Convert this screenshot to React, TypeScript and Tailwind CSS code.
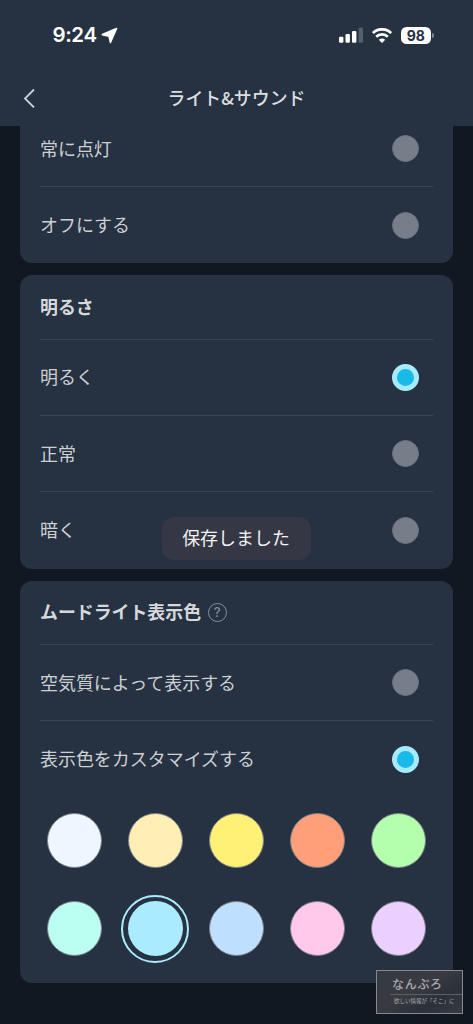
import type { ReactNode } from 'react'
import clsx from 'clsx'

const swatches = [
  { name: 'white', color: 'bg-[#eff6ff]' },
  { name: 'cream', color: 'bg-[#ffefb5]' },
  { name: 'yellow', color: 'bg-[#fff076]' },
  { name: 'orange', color: 'bg-[#ff9f79]' },
  { name: 'green', color: 'bg-[#b3ffae]' },
  { name: 'mint', color: 'bg-[#bbfff2]' },
  { name: 'aqua', color: 'bg-[#aaebff]', selected: true },
  { name: 'blue', color: 'bg-[#bfdfff]' },
  { name: 'pink', color: 'bg-[#ffc9eb]' },
  { name: 'purple', color: 'bg-[#ebd0ff]' },
]

function StatusBar() {
  return (
    <div className="flex h-[70px] items-center justify-between pl-[52.5px] pr-[39.5px]">
      <div className="flex items-center gap-[4px] font-['Inter',sans-serif] text-[20.5px] font-semibold leading-none tracking-[-0.4px] text-white">
        <span className="pt-px">9:24</span>
        <svg
          width="17"
          height="17"
          viewBox="0 0 17 17"
          fill="currentColor"
          stroke="currentColor"
          strokeWidth="1.6"
          strokeLinejoin="round"
        >
          <path d="M1.4 7.6 15.6 1.5 9.4 15.4 8 9.1Z" />
        </svg>
      </div>
      <div className="flex items-center">
        <svg width="25" height="16" viewBox="0 0 25 16" fill="#fff">
          <rect x="0" y="9.7" width="4.4" height="6" rx="1.2" />
          <rect x="6.5" y="7" width="4.4" height="8.7" rx="1.2" />
          <rect x="13" y="3.9" width="4.4" height="11.8" rx="1.2" />
          <rect x="19.6" y=".5" width="4.4" height="15.2" rx="1.2" opacity=".22" />
        </svg>
        <svg className="ml-[8px]" width="20" height="15" viewBox="0 0 20 15" fill="none" stroke="#fff" strokeWidth="2.8">
          <path d="M.9 5.1a13 13 0 0 1 18.2 0" />
          <path d="M4.2 8.8a8.3 8.3 0 0 1 11.6 0" />
          <path d="M6.8 11.7q3.2-2.4 6.4 0L10 14.9Z" fill="#fff" stroke="none" />
        </svg>
        <span className="ml-[8.5px] flex h-[17px] w-[30.5px] items-center justify-center rounded-[5.5px] bg-white pt-px font-['Inter',sans-serif] text-[14px] font-bold leading-none text-[#263241]">
          98
        </span>
        <span className="ml-px h-[5px] w-[1.5px] rounded-r-full bg-[#7d858e]" />
      </div>
    </div>
  )
}

function Radio({ checked }: { checked?: boolean }) {
  return (
    <span
      className={clsx(
        'box-border size-[27px] shrink-0 rounded-full',
        checked ? 'border-[5.5px] border-[#a5eafd] bg-[#19b9ea]' : 'border-[1.5px] border-[#69727e] bg-[#777e89]',
      )}
    />
  )
}

function Option({ label, checked, last }: { label: string; checked?: boolean; last?: boolean }) {
  return (
    <div
      className={clsx(
        'flex h-[76.3px] items-center justify-between pr-[14.5px]',
        !last && 'border-b-[1.5px] border-[#384556]',
      )}
    >
      <span>{label}</span>
      <Radio checked={checked} />
    </div>
  )
}

function CardTitle({ children }: { children: ReactNode }) {
  return (
    <div className="flex h-[64.4px] items-center border-b-[1.5px] border-[#384556] text-[17.9px] font-bold text-[#d6d9dc]">
      {children}
    </div>
  )
}

export default function App() {
  return (
    <div className="relative h-[1024px] w-[473px] overflow-hidden bg-[#111822] font-['Noto_Sans_CJK_JP',sans-serif] text-[17.97px] leading-none text-[#cdd0d3]">
      <header className="h-[126px] bg-[#263241]">
        <StatusBar />
        <div className="grid h-[56px] grid-cols-[60px_1fr_60px] items-center">
          <svg className="ml-[23px]" width="13" height="20" viewBox="0 0 13 20" fill="none" stroke="currentColor" strokeWidth="1.8">
            <path d="M11 1.5 2 10.5l9 9" />
          </svg>
          <h1 className="text-center text-[17.9px] font-medium text-[#dcdee1]">ライト&サウンド</h1>
        </div>
      </header>

      <main className="flex flex-col gap-[12px] px-[20px]">
        <section className="rounded-b-[12px] bg-[#263241] px-[20px]">
          <div className="flex h-[61px] items-center justify-between border-b-[1.5px] border-[#384556] pb-[14.5px] pr-[14.5px]">
            <span>常に点灯</span>
            <Radio />
          </div>
          <Option label="オフにする" last />
        </section>

        <section className="rounded-[12px] bg-[#263241] px-[20px]">
          <CardTitle>明るさ</CardTitle>
          <Option label="明るく" checked />
          <Option label="正常" />
          <Option label="暗く" last />
        </section>

        <section className="h-[402.5px] rounded-[12px] bg-[#263241] px-[20px]">
          <CardTitle>
            ムードライト表示色
            <span className="ml-[7px] flex size-[18.5px] items-center justify-center rounded-full border-[1.5px] border-[#858b93] font-['Inter',sans-serif] text-[13px] font-medium text-[#858b93]">
              ?
            </span>
          </CardTitle>
          <Option label="空気質によって表示する" />
          <Option label="表示色をカスタマイズする" checked last />
          <div className="-mx-[6.5px] -mt-[0.7px] grid grid-cols-5">
            {swatches.map((s) => (
              <div key={s.name} className="flex h-[88px] items-center justify-center">
                <span
                  className={clsx(
                    'flex items-center justify-center rounded-full',
                    s.selected && 'size-[68px] border-2 border-[#aaebff]',
                  )}
                >
                  <span
                    className={clsx('size-[55px] rounded-full', s.color, !s.selected && 'border border-[#7b8087]')}
                  />
                </span>
              </div>
            ))}
          </div>
        </section>
      </main>

      <div className="absolute left-[162px] top-[517px] flex h-[43px] w-[149px] items-center justify-center rounded-[12px] bg-[#353844] pb-px pr-px text-[#f2f3f4]">
        保存しました
      </div>

      <div className="absolute left-[376px] top-[970px] h-[44px] w-[87px] border-[1.5px] border-[#858990] bg-[linear-gradient(150deg,#343a43_0%,#3a3a41_45%,#2b3039_70%,#393a42_100%)] text-[#a9abaf]">
        <div className="pl-[15px] pt-[6px] text-[12px] font-medium leading-[14px] tracking-[0.7px]">なんぶろ</div>
        <div className="ml-[13px] mt-[3px] h-px bg-[#5c6067]" />
        <div className="whitespace-nowrap pl-[17px] pt-[3px] text-[5.5px] leading-[7px]">
          欲しい情報が「そこ」に
        </div>
      </div>
    </div>
  )
}
